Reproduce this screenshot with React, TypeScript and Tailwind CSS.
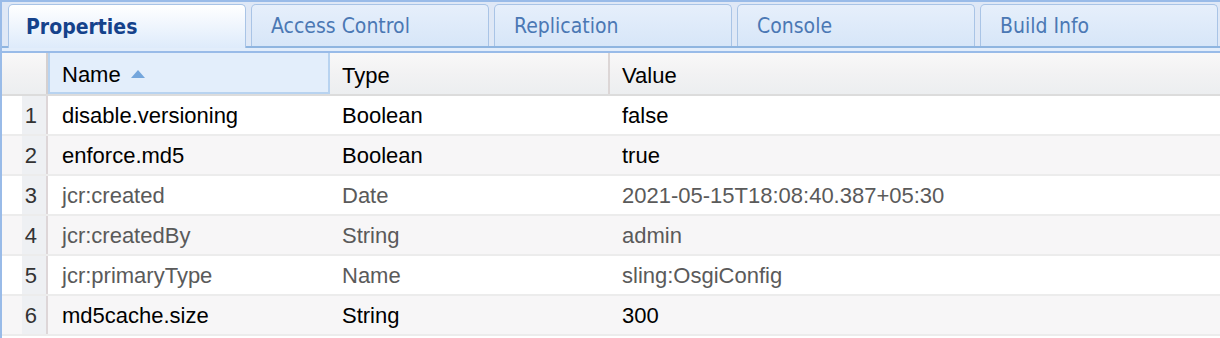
import React from 'react';

const tabs = ['Properties', 'Access Control', 'Replication', 'Console', 'Build Info'];

const rows = [
  { name: 'disable.versioning', type: 'Boolean', value: 'false', dim: false },
  { name: 'enforce.md5', type: 'Boolean', value: 'true', dim: false },
  { name: 'jcr:created', type: 'Date', value: '2021-05-15T18:08:40.387+05:30', dim: true },
  { name: 'jcr:createdBy', type: 'String', value: 'admin', dim: true },
  { name: 'jcr:primaryType', type: 'Name', value: 'sling:OsgiConfig', dim: true },
  { name: 'md5cache.size', type: 'String', value: '300', dim: false },
];

const App: React.FC = () => {
  return (
    <div className="w-[1220px] h-[338px] overflow-hidden bg-white border-l-2 border-[#99bbe8]">
      {/* tab strip */}
      <div className="border-t-2 border-[#99bbe8] bg-[#dfe8f6] pt-[2px] pl-[6px] flex gap-[5px] h-[46px]">
        {tabs.map((t, i) => (
          <div
            key={t}
            className={`w-[238px] h-[42px] shrink-0 rounded-t-[5px] border border-b-0 border-[#a9c4e6] flex items-center pt-[3px] text-[21px] font-stretch-condensed ${
              i === 0
                ? 'bg-gradient-to-b from-[#ffffff] to-[#deebfb] text-[#15428b] font-bold h-[44px] pl-[17px]'
                : 'bg-gradient-to-b from-[#e6effb] to-[#d7e6f8] text-[#4b78b4] pl-[19px]'
            }`}
            style={{ fontFamily: '"DejaVu Sans Condensed", "DejaVu Sans", Verdana, sans-serif' }}
          >
            {t}
          </div>
        ))}
      </div>
      <div className="h-[2px] bg-[#8fb5e0]" />
      <div className="h-[3px] bg-[#e2edfb]" />
      <div className="h-[2px] bg-[#99bbe8]" />

      <div className="text-[22px]" style={{ fontFamily: '"Liberation Sans", Arial, sans-serif' }}>
        {/* header */}
        <div className="flex h-[43px] bg-gradient-to-b from-[#f9f8f8] via-[#f2f2f3] to-[#eceef0] border-b-2 border-[#dcdcdc]">
          <div className="w-[46px] shrink-0 border-r-2 border-[#d5d0d0]" />
          <div className="w-[282px] shrink-0 flex items-center pl-[12px] pt-[4px] bg-[#e3eefb] border-2 border-t-0 border-[#b8d3f0] text-black">
            Name
            <svg width="14" height="8" viewBox="0 0 14 8" className="ml-[10px] mt-[-2px]">
              <path d="M7 0 L14 8 L0 8 Z" fill="#74a6dc" />
            </svg>
          </div>
          <div className="w-[280px] shrink-0 flex items-center pl-[12px] pt-[4px] border-r-2 border-[#dcd6d6] text-black">Type</div>
          <div className="flex-1 flex items-center pl-[12px] pt-[4px] text-black">Value</div>
        </div>
        {/* rows */}
        {rows.map((r, i) => (
          <div
            key={r.name}
            className={`flex h-[40px] border-b-2 border-[#ececec] ${i % 2 === 1 ? 'bg-[#f7f6f7]' : 'bg-white'} ${
              r.dim ? 'text-[#5a5a5a]' : 'text-black'
            }`}
          >
            <div className="w-[46px] shrink-0 flex border-r-2 border-[#ddd6d8]">
              <div className="w-[20px] shrink-0" />
              <div className="flex-1 flex items-center justify-end pr-[9px] bg-[#eef0f3] text-[#333]">{i + 1}</div>
            </div>
            <div className="w-[282px] shrink-0 flex items-center pl-[14px]">{r.name}</div>
            <div className="w-[280px] shrink-0 flex items-center pl-[12px]">{r.type}</div>
            <div className="flex-1 flex items-center pl-[12px]">{r.value}</div>
          </div>
        ))}
      </div>
    </div>
  );
};

export default App;
